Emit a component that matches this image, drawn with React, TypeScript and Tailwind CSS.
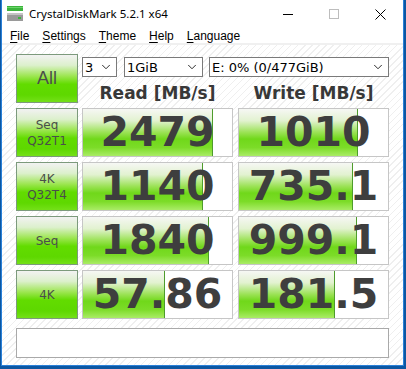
import { ChevronDown } from 'lucide-react';

const ROWS = [
  { top: 'Seq', bottom: 'Q32T1', read: '2479', write: '1010', rw: 130, ww: 119 },
  { top: '4K', bottom: 'Q32T4', read: '1140', write: '735.1', rw: 120, ww: 114 },
  { top: 'Seq', bottom: '', read: '1840', write: '999.1', rw: 126, ww: 118 },
  { top: '4K', bottom: '', read: '57.86', write: '181.5', rw: 82, ww: 96 },
];

const MENU = ['File', 'Settings', 'Theme', 'Help', 'Language'];

function AppIcon() {
  return (
    <svg width="16" height="16" viewBox="0 0 16 16">
      <rect x="0" y="0" width="16" height="5" fill="#3cb43c" />
      <rect x="0" y="1" width="16" height="1" fill="#6ad66a" />
      <rect x="0" y="7" width="16" height="8" fill="#9a9a9a" />
      <rect x="0" y="7" width="16" height="2" fill="#c4c4c4" />
      <rect x="11" y="11" width="3" height="2" fill="#3cb43c" />
    </svg>
  );
}

function Select({ value, className }: { value: string; className: string }) {
  return (
    <div className={`flex h-[20px] items-center justify-between border border-[#7a7a7a] bg-white pl-[2px] pr-[3px] text-[13px] text-black ${className}`}>
      <span className="leading-none">{value}</span>
      <ChevronDown size={14} strokeWidth={1.4} className="text-black" />
    </div>
  );
}

function Label({ children, big }: { children: React.ReactNode; big?: boolean }) {
  return (
    <div
      className={`flex h-full w-[62px] shrink-0 flex-col items-center justify-center border border-[#7c9a7c] bg-[linear-gradient(180deg,#f2f2f2_0%,#dcf0cc_22%,#9ce650_45%,#62dc00_62%,#5ed800_85%,#74e018_100%)] text-[#4a4f4a] ${big ? "font-['Liberation_Sans',sans-serif] text-[18px]" : 'text-[12px] leading-[16px]'}`}
    >
      {children}
    </div>
  );
}

function Value({ value, fill, className }: { value: string; fill: number; className: string }) {
  return (
    <div className={`relative h-full w-[151px] shrink-0 overflow-hidden border border-[#c6c6c6] bg-white ${className}`}>
      <div
        className="absolute inset-y-0 left-0 border-r border-[#4e9c2c] bg-[linear-gradient(180deg,#f6f7f4_0%,#e2f2d0_25%,#9ae254_50%,#70d81a_64%,#7cdc28_82%,#aaec66_100%)]"
        style={{ width: fill }}
      />
      <span className="relative flex h-full items-center justify-center text-[41px] font-bold leading-none text-[#3e3e3e]">
        {value}
      </span>
    </div>
  );
}

export default function App() {
  return (
    <div className="h-[369px] w-[406px] bg-[#0c57a2] pb-[3px] pl-[1px] pr-[2px] font-['DejaVu_Sans',sans-serif]">
      <div className="flex h-full w-full flex-col border-x border-b border-[#2a80d8] bg-white">
        {/* title bar */}
        <div className="flex h-[28px] items-center font-['Noto_Sans',sans-serif] text-[11.5px] text-black">
          <div className="ml-[5px]">
            <AppIcon />
          </div>
          <span className="ml-[6px]">CrystalDiskMark 5.2.1 x64</span>
          <div className="ml-auto flex h-full">
            <div className="flex w-[46px] items-center justify-center">
              <div className="h-px w-[10px] bg-black" />
            </div>
            <div className="flex w-[46px] items-center justify-center">
              <div className="h-[10px] w-[10px] border border-[#bdbdbd]" />
            </div>
            <div className="flex w-[46px] items-center justify-center">
              <svg width="11" height="11" viewBox="0 0 11 11">
                <path d="M0.5 0.5 L10.5 10.5 M10.5 0.5 L0.5 10.5" stroke="#000" strokeWidth="1" />
              </svg>
            </div>
          </div>
        </div>

        {/* menu bar */}
        <div className="flex h-[15px] items-center gap-[13px] pl-[8px] font-['Liberation_Sans',sans-serif] text-[12px] text-black">
          {MENU.map((m) => (
            <span key={m} className="leading-none">
              <u className="underline-offset-2">{m[0]}</u>
              {m.slice(1)}
            </span>
          ))}
        </div>
        <div className="h-[2px] bg-[#f0f0f0]" />

        {/* client */}
        <div className="flex flex-1 flex-col bg-[repeating-linear-gradient(135deg,#ffffff_0px,#ffffff_4px,#efefef_4px,#efefef_5px)] pl-[14px] pt-[9px]">
          <div className="flex h-[49px]">
            <Label big>All</Label>
            <div className="ml-[4px] flex w-[307px] flex-col">
              <div className="mt-[3px] flex">
                <Select value="3" className="w-[35px]" />
                <Select value="1GiB" className="ml-[7px] w-[79px]" />
                <Select value="E: 0% (0/477GiB)" className="ml-[6px] w-[180px]" />
              </div>
              <div className="mt-[7px] flex text-[17px] font-bold leading-[18px] text-[#383838]">
                <div className="w-[151px] text-center">Read [MB/s]</div>
                <div className="ml-[5px] w-[151px] text-center">Write [MB/s]</div>
              </div>
            </div>
          </div>

          <div className="mt-[5px] flex flex-col gap-[5px]">
            {ROWS.map((r, i) => (
              <div key={i} className="flex h-[49px]">
                <Label>
                  <span>{r.top}</span>
                  {r.bottom && <span>{r.bottom}</span>}
                </Label>
                <Value value={r.read} fill={r.rw} className="ml-[4px]" />
                <Value value={r.write} fill={r.ww} className="ml-[5px]" />
              </div>
            ))}
          </div>

          <div className="mt-[9px] h-[30px] w-[373px] border border-[#a9a9a9] bg-white" />
        </div>
      </div>
    </div>
  );
}
